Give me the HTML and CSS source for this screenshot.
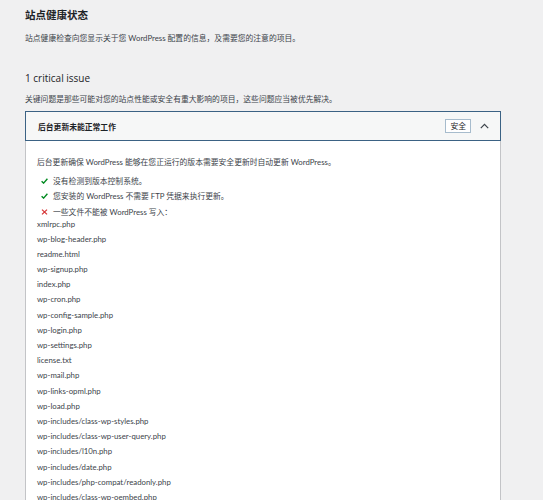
FILE: index.html
```html
<!DOCTYPE html>
<html lang="zh-CN">
<head>
<meta charset="utf-8">
<title>站点健康状态</title>
<link rel="stylesheet" href="styles.css">
</head>
<body>
<div class="wrap">
  <h1 class="title">站点健康状态</h1>
  <p class="desc">站点健康检查向您显示关于您 WordPress 配置的信息，及需要您的注意的项目。</p>
  <h2 class="issues-title">1 critical issue</h2>
  <p class="desc desc-issues">关键问题是那些可能对您的站点性能或安全有重大影响的项目，这些问题应当被优先解决。</p>
  <div class="panel">
    <div class="panel-head">
      <span class="panel-title">后台更新未能正常工作</span>
      <span class="badge">安全</span>
      <svg class="chevron" width="9" height="6" viewBox="0 0 9 6"><path d="M0.8 5.2 L4.5 1.3 L8.2 5.2" fill="none" stroke="#3c434a" stroke-width="1.2"/></svg>
    </div>
    <div class="panel-body">
      <p class="lead">后台更新确保 WordPress 能够在您正运行的版本需要安全更新时自动更新 WordPress。</p>
      <ul class="checks">
        <li><svg class="icon" width="7" height="6" viewBox="0 0 7 6"><path d="M0.6 3.2 L2.6 5.1 L6.4 0.8" fill="none" stroke="#008a20" stroke-width="1.4"/></svg>没有检测到版本控制系统。</li>
        <li><svg class="icon" width="7" height="6" viewBox="0 0 7 6"><path d="M0.6 3.2 L2.6 5.1 L6.4 0.8" fill="none" stroke="#008a20" stroke-width="1.4"/></svg>您安装的 WordPress 不需要 FTP 凭据来执行更新。</li>
        <li><svg class="icon" width="7" height="6" viewBox="0 0 7 6"><path d="M1 0.6 L6 5.4 M6 0.6 L1 5.4" fill="none" stroke="#d63638" stroke-width="1.3"/></svg>一些文件不能被 WordPress 写入：</li>
      </ul>
      <ul class="files">
        <li>xmlrpc.php</li>
        <li>wp-blog-header.php</li>
        <li>readme.html</li>
        <li>wp-signup.php</li>
        <li>index.php</li>
        <li>wp-cron.php</li>
        <li>wp-config-sample.php</li>
        <li>wp-login.php</li>
        <li>wp-settings.php</li>
        <li>license.txt</li>
        <li>wp-mail.php</li>
        <li>wp-links-opml.php</li>
        <li>wp-load.php</li>
        <li>wp-includes/class-wp-styles.php</li>
        <li>wp-includes/class-wp-user-query.php</li>
        <li>wp-includes/l10n.php</li>
        <li>wp-includes/date.php</li>
        <li>wp-includes/php-compat/readonly.php</li>
        <li>wp-includes/class-wp-oembed.php</li>
      </ul>
    </div>
  </div>
</div>
</body>
</html>
```
FILE: styles.css
```css
html, body {
  margin: 0;
  padding: 0;
}
body {
  background: #f0f0f1;
  color: #3c434a;
  font-family: "Lato", "Noto Sans CJK SC", sans-serif;
  font-size: 7.8px;
  height: 500px;
  overflow: hidden;
}
.wrap {
  padding-left: 25px;
  width: 476px;
}
.title {
  margin: 8px 0 0;
  font-size: 10.5px;
  line-height: 14px;
  font-weight: 700;
  color: #1d2327;
}
.desc {
  margin: 10px 0 0;
  line-height: 12px;
}
.issues-title {
  margin: 27px 0 0;
  font-family: "Open Sans", "Noto Sans CJK SC", sans-serif;
  font-size: 10px;
  line-height: 14px;
  font-weight: 400;
  color: #1d2327;
}
.desc-issues {
  margin-top: 8px;
}
.panel {
  margin-top: 6px;
  background: #fff;
  border-left: 1px solid #c3c4c7;
  border-right: 1px solid #c3c4c7;
}
.panel-head {
  display: flex;
  align-items: center;
  height: 28px;
  margin: 0 -1px;
  padding: 0 11px 0 12px;
  background: #f6f7f7;
  border: 1px solid #3b6284;
}
.panel-title {
  flex: 1;
  font-weight: 700;
  color: #1d2327;
}
.badge {
  display: block;
  height: 12px;
  line-height: 12px;
  padding: 0 4px;
  border: 1px solid #a7bccd;
  background: #fff;
  color: #1d2327;
}
.chevron {
  display: block;
  margin-left: 9px;
}
.panel-body {
  padding: 15px 11px 0;
}
.lead {
  margin: 0;
  line-height: 12px;
}
ul {
  list-style: none;
  margin: 0;
  padding: 0;
}
.checks {
  margin-top: 6.5px;
}
.checks li {
  display: flex;
  align-items: center;
  line-height: 12px;
  margin-bottom: 3.5px;
}
.checks li:last-child {
  margin-bottom: 0;
}
.icon {
  display: block;
  margin: 0 5px 0 4px;
  flex: none;
}
.files li {
  line-height: 12px;
  margin-bottom: 3.2px;
}
```
